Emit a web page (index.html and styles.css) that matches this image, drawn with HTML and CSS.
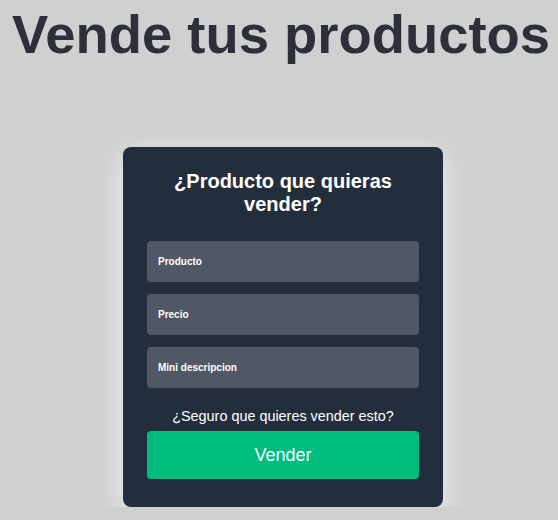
FILE: index.html
```html
<!DOCTYPE html>
<html lang="es">
<head>
<meta charset="utf-8">
<title>Vende tus productos</title>
<link rel="stylesheet" href="styles.css">
</head>
<body>
<main class="page">
  <h1 class="page-title">Vende tus productos</h1>
  <form class="card">
    <h2 class="card-title">¿Producto que quieras vender?</h2>
    <div class="fields">
      <input class="field" type="text" placeholder="Producto">
      <input class="field" type="text" placeholder="Precio">
      <input class="field" type="text" placeholder="Mini descripcion">
    </div>
    <p class="confirm">¿Seguro que quieres vender esto?</p>
    <button class="submit" type="button">Vender</button>
  </form>
</main>
</body>
</html>
```

FILE: styles.css
```css
html, body {
  margin: 0;
  padding: 0;
  background: #d0d0d0;
  font-family: "Liberation Sans", Arial, sans-serif;
}

.page {
  padding-left: 8px;
  display: flex;
  flex-direction: column;
  align-items: center;
}

.page-title {
  margin: 4px 4px 0 0;
  font-size: 54.4px;
  font-weight: 700;
  color: #2d3038;
  line-height: 62px;
}

.card {
  margin-top: 81px;
  width: 320px;
  box-sizing: border-box;
  padding: 23px 24px 28px;
  background: #232e3c;
  border-radius: 8px;
  box-shadow: 0 8px 30px rgba(255, 255, 255, 0.7);
  display: flex;
  flex-direction: column;
}

.card-title {
  margin: 0 0 25px;
  font-size: 20px;
  font-weight: 700;
  color: #ffffff;
  text-align: center;
  line-height: 23px;
}

.fields {
  display: flex;
  flex-direction: column;
  gap: 12px;
}

.field {
  height: 41px;
  box-sizing: border-box;
  border: none;
  border-radius: 4px;
  background: #515865;
  padding: 0 11px;
  font-family: "Liberation Sans", Arial, sans-serif;
  font-size: 10px;
  font-weight: 700;
  color: #ffffff;
  outline: none;
}

.field::placeholder {
  color: #ffffff;
  opacity: 1;
}

.confirm {
  margin: 20px 0 7px;
  font-size: 14.4px;
  color: #ffffff;
  text-align: center;
}

.submit {
  height: 48px;
  border: none;
  border-radius: 4px;
  background: #00bd7e;
  color: #ffffff;
  font-family: "Liberation Sans", Arial, sans-serif;
  font-size: 18px;
  cursor: pointer;
}
```
